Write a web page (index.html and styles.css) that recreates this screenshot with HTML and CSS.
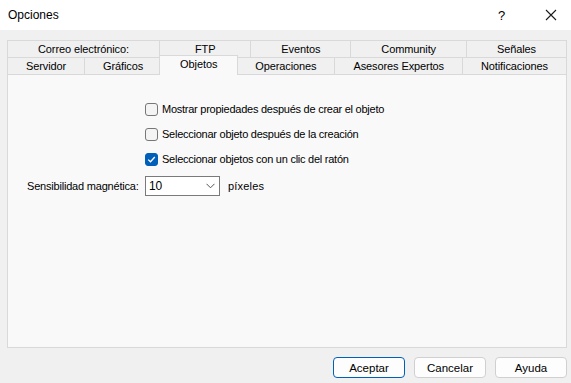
FILE: index.html
```html
<!DOCTYPE html>
<html lang="es">

<head>
    <meta charset="UTF-8" />
    <meta name="viewport" content="width=device-width, initial-scale=1.0" />
    <title>Opciones</title>

    <link rel="stylesheet" href="styles.css">
</head>

<body>
    <!-- BARRA DE TÍTULO -->
    <div class="titlebar">
        <span class="title">Opciones</span>
        <span class="help">?</span>
        <svg class="close" width="12" height="12" viewBox="0 0 12 12">
            <path d="M1 1 L11 11 M11 1 L1 11" stroke="#1a1a1a" stroke-width="1.1" fill="none" />
        </svg>
    </div>

    <div class="content">
        <!-- PESTAÑAS -->
        <div class="tabs">
            <div class="row">
                <div class="tab">Correo electrónico:</div>
                <div class="tab wide">FTP</div>
                <div class="tab">Eventos</div>
                <div class="tab">Community</div>
                <div class="tab">Señales</div>
            </div>
            <div class="row">
                <div class="tab">Servidor</div>
                <div class="tab">Gráficos</div>
                <div class="tab active">Objetos</div>
                <div class="tab">Operaciones</div>
                <div class="tab">Asesores Expertos</div>
                <div class="tab">Notificaciones</div>
            </div>
        </div>

        <!-- PANEL -->
        <div class="panel">
            <div class="checks">
                <label class="check"><span class="box"></span>Mostrar propiedades después de crear el objeto</label>
                <label class="check"><span class="box"></span>Seleccionar objeto después de la creación</label>
                <label class="check"><span class="box on">
                    <svg width="9" height="9" viewBox="0 0 9 9">
                        <path d="M1.2 4.6 L3.5 6.8 L7.8 2" stroke="#fff" stroke-width="1.3" fill="none" />
                    </svg>
                </span>Seleccionar objetos con un clic del ratón</label>
            </div>

            <div class="field">
                <span class="label">Sensibilidad magnética:</span>
                <div class="select">
                    <span>10</span>
                    <svg width="9" height="6" viewBox="0 0 9 6">
                        <path d="M0.5 0.8 L4.5 4.8 L8.5 0.8" stroke="#555" stroke-width="1" fill="none" />
                    </svg>
                </div>
                <span class="unit">píxeles</span>
            </div>
        </div>

        <!-- BOTONES -->
        <div class="buttons">
            <div class="btn default">Aceptar</div>
            <div class="btn">Cancelar</div>
            <div class="btn">Ayuda</div>
        </div>
    </div>
</body>

</html>
```

FILE: styles.css
```css
body {
    margin: 0;
    width: 571px;
    height: 383px;
    background: #f0f0f0;
    font-family: "Liberation Sans", Arial, sans-serif;
    font-size: 11px;
    color: #000;
    overflow: hidden;
}

.titlebar {
    height: 30px;
    background: #fff;
    display: flex;
    align-items: center;
    padding-left: 8px;
}

.title {
    flex: 1;
    font-size: 12px;
}

.help {
    width: 14px;
    margin-right: 33px;
    font-size: 13px;
}

.close {
    margin-right: 14px;
}

.content {
    padding: 10px 4px 0 7px;
}

.tabs {
    display: flex;
    flex-direction: column;
    font-size: 11px;
}

.row {
    display: flex;
    height: 17px;
}

.tab {
    flex: 1 1 auto;
    display: flex;
    align-items: center;
    justify-content: center;
    border: 1px solid #d9d9d9;
    border-right: none;
    border-bottom: none;
    background: #f0f0f0;
    letter-spacing: -0.1px;
}

.tab.wide {
    padding: 0 5px;
}

.tab:last-child {
    border-right: 1px solid #d9d9d9;
}

.tab.active {
    position: relative;
    z-index: 1;
    margin: -2px -2px -1px -2px;
    padding: 0 2px 3px;
    background: #f9f9f9;
    border-right: 1px solid #d9d9d9;
}

.panel {
    height: 272px;
    background: #f9f9f9;
    border: 1px solid #d9d9d9;
    display: flex;
    flex-direction: column;
}

.checks {
    display: flex;
    flex-direction: column;
    gap: 11px;
    padding: 27px 0 0 137px;
    letter-spacing: -0.25px;
}

.check {
    display: flex;
    align-items: center;
    gap: 4px;
    height: 14px;
}

.box {
    width: 11px;
    height: 11px;
    border: 1px solid #777;
    border-radius: 3px;
    background: #f4f4f4;
    display: flex;
    align-items: center;
    justify-content: center;
}

.box.on {
    background: #005fb8;
    border-color: #005fb8;
}

.field {
    display: flex;
    align-items: center;
    margin-top: 10px;
    padding-left: 19px;
    letter-spacing: -0.2px;
}

.label {
    width: 118px;
    white-space: nowrap;
}

.select {
    height: 18px;
    border: 1px solid #7a7a7a;
    background: #fff;
    display: flex;
    align-items: center;
    justify-content: space-between;
    padding: 0 4px 0 3px;
    width: 66px;
    font-size: 12px;
}

.unit {
    margin-left: 8px;
    letter-spacing: 0.2px;
}

.buttons {
    display: flex;
    justify-content: flex-end;
    gap: 9px;
    margin-top: 9px;
}

.btn {
    width: 70px;
    height: 19px;
    border: 1px solid #d0d0d0;
    border-radius: 4px;
    background: #fdfdfd;
    display: flex;
    align-items: center;
    justify-content: center;
    font-size: 11.5px;
}

.btn.default {
    border: 1px solid #005fb8;
}
```
